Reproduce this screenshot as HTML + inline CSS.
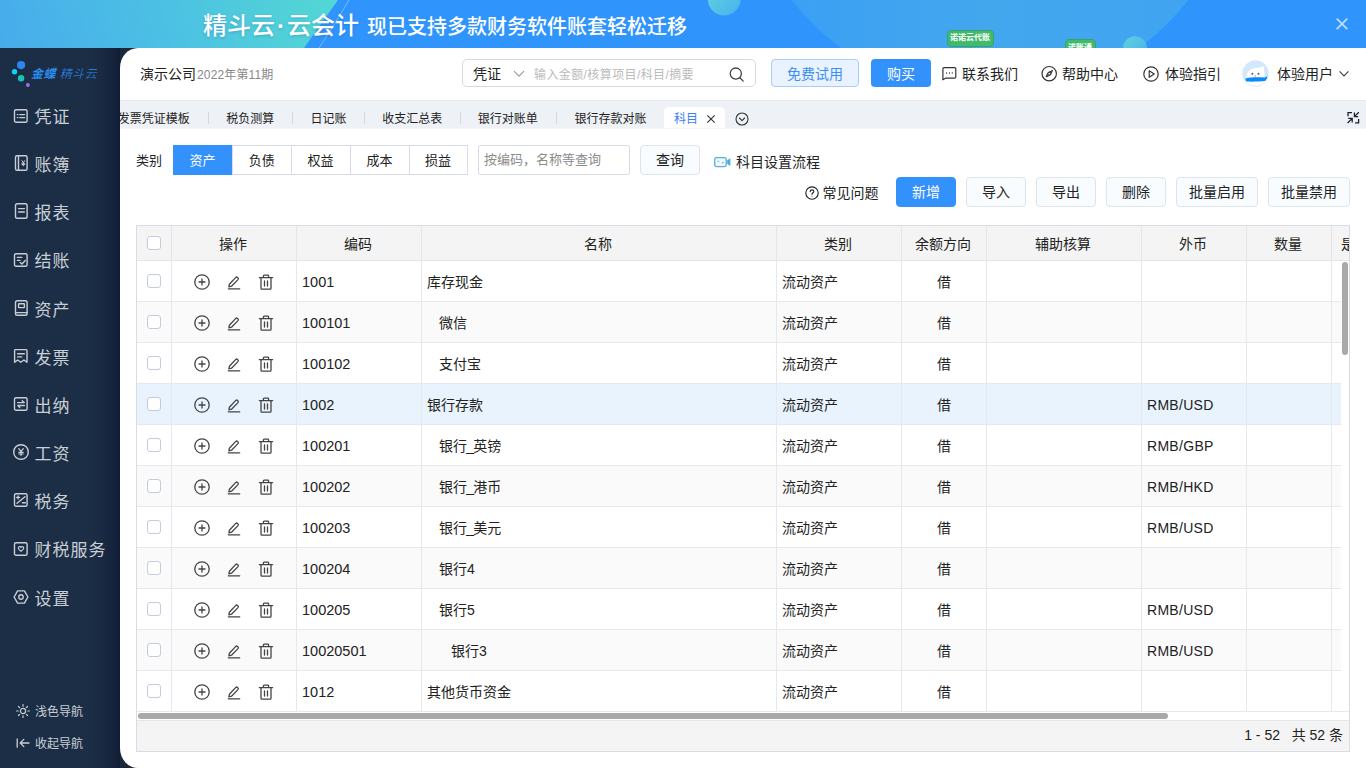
<!DOCTYPE html>
<html lang="zh-CN">
<head>
<meta charset="utf-8">
<title>精斗云·云会计 - 科目</title>
<style>
*{box-sizing:border-box;margin:0;padding:0}
html,body{width:1366px;height:768px;overflow:hidden}
body{font-family:"Liberation Sans","Noto Sans CJK SC",sans-serif;font-size:14px;color:#222;background:#1a2837;position:relative}
.abs{position:absolute}
i{font-style:normal}
#banner{position:absolute;left:0;top:0;width:1366px;height:48px;background:#2f95fd;overflow:hidden}
#banner svg{position:absolute;left:0;top:0}
#banner .t1{position:absolute;left:203px;top:9px;font-size:24px;line-height:34px;color:#fff;font-weight:500;white-space:nowrap;text-shadow:0 1px 3px rgba(0,60,120,.25)}
#banner .t1 .dot{padding:0 2px;font-weight:700}
#banner .t2{position:absolute;left:367px;top:9.500px;font-size:20px;line-height:34px;color:#fff;font-weight:500;white-space:nowrap}
#banner .tag{position:absolute;background:#41bb6b;border:1px solid #37a174;border-radius:4px;color:#fff;font-size:8px;font-weight:700;line-height:14px;text-align:center;white-space:nowrap;overflow:hidden}
#side{position:absolute;left:0;top:48px;width:120px;height:720px;background:linear-gradient(90deg,#1c2e45 0,#1c2e45 90px,#182841 106px,#111d37 120px)}
.logo{position:absolute;left:31px;top:16px;font-size:12px;line-height:20px;color:#2a8cf0;font-style:italic;white-space:nowrap;letter-spacing:.5px}
.logo b{font-weight:700}
.logo i{font-style:italic;font-weight:300}
.nav{position:absolute;left:0;width:120px;height:24px;color:#c9ced6;font-size:17px;letter-spacing:1px;line-height:24px;white-space:nowrap}
.nav svg{position:absolute;left:13px;top:2.300px}
.nav span{position:absolute;left:34.500px;top:1.500px}
.nav2{position:absolute;left:0;width:120px;height:20px;color:#c9ced6;font-size:12px;line-height:20px;white-space:nowrap}
.nav2 svg{position:absolute;left:15.800px;top:3px}
.nav2 span{position:absolute;left:35px;top:1px}
#main{position:absolute;left:120px;top:48px;width:1246px;height:720px;background:#fff;border-radius:18px 0 0 18px/20px 0 0 20px;overflow:hidden}
#hdr{position:absolute;left:0;top:0;width:1246px;height:52px}
.co{position:absolute;left:20px;top:16px;line-height:20px;white-space:nowrap}
.co .c1{font-size:14px;color:#222}
.co .c2{font-size:12px;color:#888;margin-left:1px;letter-spacing:.150px}
.search{position:absolute;left:342px;top:11px;width:294px;height:28px;border:1px solid #d9d9d9;border-radius:5px;background:#fff}
.search .s1{position:absolute;left:10px;top:4px;font-size:14px;line-height:20px;color:#222}
.search .chev{position:absolute;left:50px;top:10px}
.search .s2{position:absolute;left:71px;top:5px;font-size:12px;line-height:20px;color:#bbb;white-space:nowrap;letter-spacing:.400px}
.search .mag{position:absolute;left:265px;top:5px}
.btn-free{position:absolute;left:651px;top:11px;width:88px;height:28px;border:1px solid #a6cdfb;border-radius:4px;background:#e9f3ff;color:#3d8df5;font-size:14px;line-height:28px;text-align:center}
.btn-buy{position:absolute;left:751px;top:11px;width:60px;height:28px;border-radius:4px;background:#3391fb;color:#fff;font-size:14px;line-height:30px;text-align:center}
.hl{position:absolute;top:16px;font-size:14px;line-height:20px;color:#222;white-space:nowrap}
#tabs{position:absolute;left:0;top:52px;width:1246px;height:29px;background:#eef1f5;border-bottom:1px solid #f5f7f9;border-top:1px solid #e7eaee;font-size:12px;color:#222;overflow:hidden}
#tabs .tb{position:absolute;top:-1px;height:29px;line-height:39px;white-space:nowrap}
#tabs .sp{position:absolute;top:11px;width:1px;height:12px;background:#d3d7de}
#tabs .act{position:absolute;left:544px;top:6px;width:61px;height:22px;background:#fff;border-radius:5px 5px 0 0;color:#3b7ff5;line-height:25px}
#tabs .act span{position:absolute;left:10px;top:0}
#tabs .act svg{position:absolute;left:42px;top:7px}
.lbl{position:absolute;font-size:13px;line-height:32px;color:#222;white-space:nowrap}
.seg{position:absolute;left:53px;top:97px;width:296px;height:30px;font-size:13px}
.sg{position:absolute;top:0;width:59.750px;height:30px;border:1px solid #d9dce8;line-height:30px;text-align:center;color:#222;background:#fff}
.sg.on{background:#3391fb;border-color:#3391fb;color:#fff;z-index:1}
.q-in{position:absolute;left:358px;top:97px;width:152px;height:30px;border:1px solid #d9dce8;border-radius:2px;font-size:13px;line-height:28px;color:#8c8c8c;padding-left:5px;white-space:nowrap}
.btn{position:absolute;height:30px;border:1px solid #dfe3ea;border-radius:4px;background:#f9fcff;font-size:14px;line-height:28px;text-align:center;color:#222;white-space:nowrap}
.btn.pri{background:#3391fb;border-color:#3391fb;color:#fff}
#grid{position:absolute;left:16px;top:177px;width:1214px;height:527px;border:1px solid #d9dce6;background:#fff;overflow:hidden}
.gh{position:absolute;left:0;top:0;width:1255px;height:35px;background:#f4f4f4;border-bottom:1px solid #e4e6ea}
.hc{position:absolute;top:0;height:34px;border-right:1px solid #e4e6ea;text-align:center;line-height:37px;padding-right:2px;font-size:14px;color:#222;white-space:nowrap;overflow:hidden}
.gr{position:absolute;left:0;width:1255px;height:41px;border-bottom:1px solid #e6e8ec;background:#fff}
.gr.z{background:#fafafa}
.gr.hl{background:#e8f3fd}
.c{position:absolute;top:0;height:40px;border-right:1px solid #e6e8ee;white-space:nowrap;overflow:hidden}
.c.t{padding-left:5px;line-height:43px;font-size:14px;color:#222}
.c.ctr{text-align:center;padding-left:0}
.cb{position:absolute;left:10px;top:13px;width:14px;height:14px;border:1px solid #c3cbdd;border-radius:3px;background:#fff}
.hc .cb{top:10px}
.ic{position:absolute;top:12.300px}
.vs{position:absolute;left:1204px;top:35px;width:9px;height:450px;background:#fff}
.vsb{position:absolute;left:1204.800px;top:36px;width:6px;height:93px;border-radius:3px;background:#a9a9a9}
.hsw{position:absolute;left:0;top:486px;width:1213px;height:8px;background:#fff}
.hsb{position:absolute;left:1px;top:487px;width:1030px;height:6px;border-radius:3px;background:#a9a9a9}
.gf{position:absolute;left:0;top:494px;width:1212px;height:31px;background:#f4f4f4;border-top:1px solid #e4e6ea;text-align:right;padding-right:6px;line-height:29px;font-size:14px;color:#222}
.c.num{font-size:14.500px}
.c.cur{letter-spacing:.300px}
.u{margin:0 -.800px}

</style>
</head>
<body>
<div id="banner">
<svg width="1366" height="48" viewBox="0 0 1366 48">
<defs>
<linearGradient id="bg1" gradientUnits="userSpaceOnUse" x1="0" y1="70" x2="335" y2="-25"><stop offset="0" stop-color="#47abec"/><stop offset=".5" stop-color="#4cc1e4"/><stop offset="1" stop-color="#53d8d3"/></linearGradient>
<linearGradient id="bg2" x1="0" y1="0" x2="1" y2="0"><stop offset="0" stop-color="#3a9ef6"/><stop offset=".5" stop-color="#43a7ee"/><stop offset="1" stop-color="#3fa3f2"/></linearGradient>
<linearGradient id="bg3" x1="0" y1="0" x2="1" y2="1"><stop offset="0" stop-color="#62d6da"/><stop offset="1" stop-color="#48b0f0"/></linearGradient>
</defs>
<rect width="1366" height="48" fill="#2f95fd"/>
<path d="M0 0H338Q318 28 304 48H0Z" fill="url(#bg1)"/>
<path d="M349 0Q334 26 319 48" stroke="#6fc0f5" stroke-width="1" fill="none"/>
<circle cx="990" cy="-154" r="251" fill="url(#bg2)"/>
<circle cx="724.200" cy="-.700" r="16.300" fill="url(#bg3)"/>
<circle cx="1135" cy="48.200" r="12" fill="url(#bg3)" opacity=".9"/>
<path d="M1336.700 18.700l10.600 10.400M1347.300 18.700l-10.600 10.400" stroke="#bcdcfe" stroke-width="1.800" fill="none"/>
<path d="M966 46h8l-4 3z" fill="#3fba6c"/>
</svg>
<div class="t1">精斗云<span class="dot">·</span>云会计</div>
<div class="t2">现已支持多款财务软件账套轻松迁移</div>
<div class="tag" style="left:946.500px;top:30px;width:47px;height:16.500px">诺诺云代账</div>
<div class="tag" style="left:1064.500px;top:39px;width:31px;height:16px;line-height:16px">诺账通</div>
</div>

<div id="side">
<svg class="abs" style="left:8px;top:8px" width="26" height="40" viewBox="0 0 26 40"><circle cx="13.1" cy="9.100" r="4.100" fill="#2b86f0"/><circle cx="6.500" cy="15.700" r="2.700" fill="#0bd3f5"/><circle cx="13.100" cy="22.300" r="3.200" fill="#12c7b9"/><circle cx="19.900" cy="29" r="1.900" fill="#a66df0"/></svg>
<div class="logo"><b>金蝶</b> <i>精斗云</i></div>
<div class="nav" style="top:56.3px"><svg width="16" height="18" viewBox="0 0 16 18" fill="none" stroke="#c9ced6" stroke-width="1.4" stroke-linecap="round" stroke-linejoin="round" ><rect x="1.500" y="2.700" width="12.600" height="12.600" rx="1.600"/><path d="M4.3 7.6h.6M6.8 7.6h4.8M4.3 10.6h.6M6.8 10.6h4.8"/></svg><span>凭证</span></div>
<div class="nav" style="top:104.0px"><svg width="16" height="18" viewBox="0 0 16 18" fill="none" stroke="#c9ced6" stroke-width="1.4" stroke-linecap="round" stroke-linejoin="round" ><rect x="2.500" y="1.700" width="11.600" height="14.600" rx="1.600"/><path d="M5.500 1.900v14.200"/><path d="M8.9 6.6l1.4 2 1.4-2M10.3 8.6v3.2M8.9 9.2h2.8M8.9 10.6h2.8" stroke-width="1"/></svg><span>账簿</span></div>
<div class="nav" style="top:152.2px"><svg width="16" height="18" viewBox="0 0 16 18" fill="none" stroke="#c9ced6" stroke-width="1.4" stroke-linecap="round" stroke-linejoin="round" ><rect x="2.500" y="1.700" width="11.600" height="14.600" rx="1.800"/><path d="M5.6 6.6h5.8M5.6 10h5.8"/></svg><span>报表</span></div>
<div class="nav" style="top:200.8px"><svg width="16" height="18" viewBox="0 0 16 18" fill="none" stroke="#c9ced6" stroke-width="1.4" stroke-linecap="round" stroke-linejoin="round" ><rect x="1.500" y="2.700" width="12.600" height="12.600" rx="1.600"/><path d="M4.4 6.4h4.4M4.4 9.4h2.6M7.2 11.4l1.8 1.6 3.2-3.4"/></svg><span>结账</span></div>
<div class="nav" style="top:249.0px"><svg width="16" height="18" viewBox="0 0 16 18" fill="none" stroke="#c9ced6" stroke-width="1.4" stroke-linecap="round" stroke-linejoin="round" ><rect x="2.500" y="1.700" width="11.600" height="14.600" rx="1.800"/><rect x="5.6" y="4.8" width="5.8" height="3.8" rx=".6"/><path d="M3 13.6h11"/></svg><span>资产</span></div>
<div class="nav" style="top:297.0px"><svg width="16" height="18" viewBox="0 0 16 18" fill="none" stroke="#c9ced6" stroke-width="1.4" stroke-linecap="round" stroke-linejoin="round" ><path d="M1.600 15.300V3.600q0-1 1-1h10.400q1 0 1 1v11.700l-3.100-2.300-3.100 2.300-3.100-2.300z"/><path d="M4.600 6.800h6.800M4.600 9.900h4.200"/></svg><span>发票</span></div>
<div class="nav" style="top:345.0px"><svg width="16" height="18" viewBox="0 0 16 18" fill="none" stroke="#c9ced6" stroke-width="1.4" stroke-linecap="round" stroke-linejoin="round" ><rect x="1.500" y="2.700" width="12.600" height="12.600" rx="1.600"/><path d="M4.600 7.600h6.600l-2-1.900M11.400 10.500h-6.600l2 1.900"/></svg><span>出纳</span></div>
<div class="nav" style="top:393.0px"><svg width="16" height="18" viewBox="0 0 16 18" fill="none" stroke="#c9ced6" stroke-width="1.4" stroke-linecap="round" stroke-linejoin="round" ><circle cx="8" cy="9" r="7.300"/><path d="M5.800 5.600l2.200 3 2.200-3M8 8.600v4M5.800 9.300h4.400M5.800 11h4.400" stroke-width="1.2"/></svg><span>工资</span></div>
<div class="nav" style="top:441.2px"><svg width="16" height="18" viewBox="0 0 16 18" fill="none" stroke="#c9ced6" stroke-width="1.4" stroke-linecap="round" stroke-linejoin="round" ><rect x="1.500" y="2.700" width="12.600" height="12.600" rx="1.600"/><path d="M4 12.300l8-6.600M3.600 6.400h3M5.100 4.900v3M9.400 11.700h3"/></svg><span>税务</span></div>
<div class="nav" style="top:489.8px"><svg width="16" height="18" viewBox="0 0 16 18" fill="none" stroke="#c9ced6" stroke-width="1.4" stroke-linecap="round" stroke-linejoin="round" ><rect x="1.500" y="2.700" width="12.600" height="12.600" rx="1.600"/><path d="M8 11.300c-1.700-1.200-2.700-2.200-2.700-3.300 0-1.700 2.100-2 2.700-.6.600-1.400 2.700-1.100 2.700.6 0 1.100-1 2.100-2.700 3.300z" stroke-width="1.2"/></svg><span>财税服务</span></div>
<div class="nav" style="top:538.0px"><svg width="16" height="18" viewBox="0 0 16 18" fill="none" stroke="#c9ced6" stroke-width="1.4" stroke-linecap="round" stroke-linejoin="round" ><path d="M4.600 2.900h6.800l3.500 6.100-3.500 6.100h-6.800l-3.500-6.100z"/><circle cx="8" cy="9" r="2.200"/></svg><span>设置</span></div>
<div class="nav2" style="top:652.5px"><svg width="14" height="14" viewBox="0 0 14 14" fill="none" stroke="#c9ced6" stroke-width="1.200" stroke-linecap="round" stroke-linejoin="round"><circle cx="7" cy="7" r="2.600"/><path d="M7 .6v1.600M7 11.800v1.600M.6 7h1.600M11.800 7h1.600M2.500 2.500l1.100 1.100M10.400 10.400l1.100 1.100M2.500 11.500l1.100-1.100M10.400 3.600l1.100-1.100"/></svg><span>浅色导航</span></div>
<div class="nav2" style="top:684.5px"><svg width="14" height="14" viewBox="0 0 14 14" fill="none" stroke="#c9ced6" stroke-width="1.300" stroke-linecap="round" stroke-linejoin="round"><path d="M1.200 2.800v8.400M13 7H4.400M7.800 3.400L4.200 7l3.600 3.600"/></svg><span>收起导航</span></div>
</div>
<div id="main">
<div id="hdr">
<div class="co"><span class="c1">演示公司</span><span class="c2">2022年第11期</span></div>
<div class="search"><span class="s1">凭证</span><svg class="chev" width="12" height="8" viewBox="0 0 12 8" fill="none" stroke="#999" stroke-width="1.100"><path d="M1 1.200l5 5 5-5"/></svg><span class="s2">输入金额/核算项目/科目/摘要</span><svg class="mag" width="18" height="18" viewBox="0 0 18 18" fill="none" stroke="#444" stroke-width="1.300" stroke-linecap="round"><circle cx="7.800" cy="8.600" r="5.600"/><path d="M11.900 12.700l3.300 3.400"/></svg></div>
<div class="btn-free">免费试用</div>
<div class="btn-buy">购买</div>
<svg class="abs" style="left:821px;top:17px" width="18" height="18" viewBox="0 0 18 18" fill="none" stroke="#333" stroke-width="1.200" stroke-linejoin="round"><path d="M1.900 14.800V3.800q0-1.200 1.200-1.200h10.500q1.200 0 1.200 1.200v8.200q0 1.200-1.200 1.200H4.400z"/><path d="M5.200 8h.9M8 8h.9M10.800 8h.9" stroke-width="1.500"/></svg>
<div class="hl" style="left:842px">联系我们</div>
<svg class="abs" style="left:920px;top:17px" width="18" height="18" viewBox="0 0 18 18" fill="none" stroke="#333" stroke-width="1.200" stroke-linejoin="round"><circle cx="9.200" cy="8.700" r="7.200"/><path d="M12.500 5.500l-2 4.500-4.500 2 2-4.500z" fill="#555" stroke-width="1"/><circle cx="9.200" cy="8.700" r=".8" fill="#fff" stroke="none"/></svg>
<div class="hl" style="left:942px">帮助中心</div>
<svg class="abs" style="left:1022px;top:17px" width="18" height="18" viewBox="0 0 18 18" fill="none" stroke="#333" stroke-width="1.200" stroke-linejoin="round"><circle cx="9" cy="9" r="7.200"/><path d="M7.200 5.800v6.400l5-3.200z"/></svg>
<div class="hl" style="left:1045px">体验指引</div>
<svg class="abs" style="left:1121.500px;top:11.500px" width="27" height="27" viewBox="0 0 27 27"><defs><clipPath id="avc"><circle cx="13.500" cy="13.500" r="13"/></clipPath></defs><circle cx="13.500" cy="13.500" r="13" fill="#d3e8fd"/><g clip-path="url(#avc)"><rect x="0" y="19" width="27" height="8" fill="#fff"/><path d="M4.100 18C4.500 12.500 8 9.300 11 8.400 15 7.300 19 7.600 21.500 5.900 22 9 22.500 13 22.700 18z" fill="#fff"/><path d="M3.600 18.400C8 17.100 17 17.200 22.400 17.500 24 17.300 25 16.500 25.400 15.600 25.500 18 24.500 20.500 23 21 17 21.700 9 21.800 4.600 21.500 3.300 21 3.200 19.400 3.600 18.400z" fill="#0a8bf5"/></g><circle cx="10.400" cy="13.800" r=".95" fill="#555"/><circle cx="16.500" cy="13.800" r=".95" fill="#555"/><circle cx="13.300" cy="16" r=".75" fill="#ff7b8a"/><circle cx="8.900" cy="15.100" r=".8" fill="#ffdfe4"/><circle cx="17.700" cy="15.100" r=".8" fill="#ffdfe4"/><circle cx="13.500" cy="13.500" r="12.800" fill="none" stroke="#d3e8fd" stroke-width=".6"/></svg>
<div class="hl" style="left:1157px">体验用户</div>
<svg class="abs" style="left:1218px;top:22px" width="12" height="8" viewBox="0 0 12 8" fill="none" stroke="#444" stroke-width="1.200"><path d="M1.600 1.300l4.400 4.500 4.400-4.500"/></svg>
</div>
<div id="tabs">
<div class="tb" style="left:-2.3px">发票凭证模板</div>
<div class="tb" style="left:106.3px">税负测算</div>
<div class="tb" style="left:190.4px">日记账</div>
<div class="tb" style="left:262.2px">收支汇总表</div>
<div class="tb" style="left:357.8px">银行对账单</div>
<div class="tb" style="left:454.4px">银行存款对账</div>
<div class="sp" style="left:87.8px"></div>
<div class="sp" style="left:171.9px"></div>
<div class="sp" style="left:244.0px"></div>
<div class="sp" style="left:339.8px"></div>
<div class="sp" style="left:435.7px"></div>
<div class="act"><span>科目</span><svg width="10" height="10" viewBox="0 0 10 10" stroke="#333" stroke-width="1.100" fill="none"><path d="M1.300 1.300l7.400 7.400M8.700 1.300l-7.400 7.400"/></svg></div>
<svg class="abs" style="left:613.800px;top:9.600px" width="16" height="16" viewBox="0 0 16 16" fill="none" stroke="#333" stroke-width="1.100" stroke-linecap="round" stroke-linejoin="round"><circle cx="8" cy="8" r="6"/><path d="M5.400 7l2.600 2.600 2.600-2.600"/></svg>
<svg class="abs" style="left:1226px;top:10px" width="14" height="14" viewBox="0 0 14 14" fill="none" stroke="#1a2030" stroke-width="1.300"><path d="M2 5.200V1.600H6M9 11.800h3.600V8M12.800 1.200L8.600 5.400M8.400 1.600V5.600H12.200M1.600 12L6 7.600M2.200 7.400H6.200V11.400"/></svg>
</div>
<div class="lbl" style="left:16px;top:97px">类别</div>
<div class="seg">
<div class="sg on" style="left:0px;width:59px">资产</div>
<div class="sg" style="left:59px;width:59.5px">负债</div>
<div class="sg" style="left:117.5px;width:60px">权益</div>
<div class="sg" style="left:176.5px;width:60px">成本</div>
<div class="sg" style="left:235.5px;width:59px">损益</div>
</div>
<div class="q-in">按编码，名称等查询</div>
<div class="btn" style="left:520px;top:97px;width:60px">查询</div>
<svg class="abs" style="left:593px;top:108px" width="18" height="13" viewBox="0 0 18 13" fill="none" stroke="#56b2dc" stroke-width="1.300" stroke-linejoin="round"><rect x="1.700" y="1.600" width="11.600" height="9" rx="1.800" fill="#f0f6fa"/><path d="M14.400 4.600l2.600-1.800v6.600l-2.600-1.800z" fill="#4aa8dc" stroke-width=".8"/><path d="M4.600 5.200h1.600M9 6.600h1.400" stroke-width="1.100"/></svg>
<div class="lbl" style="left:616px;top:98px;font-size:14px;color:#222">科目设置流程</div>
<svg class="abs" style="left:685px;top:138px" width="14" height="14" viewBox="0 0 14 14" fill="none" stroke="#222" stroke-width="1.150"><circle cx="7" cy="7" r="6.200"/><path d="M5.200 5.600c0-2.400 3.600-2.300 3.600-.2 0 1.400-1.800 1.400-1.800 2.900" stroke-linecap="round"/><circle cx="7" cy="10.200" r=".5" fill="#333" stroke="none"/></svg>
<div class="lbl" style="left:702.500px;top:128.500px;font-size:14px;color:#222">常见问题</div>
<div class="btn pri" style="left:776px;top:129px;width:60px">新增</div>
<div class="btn" style="left:846px;top:129px;width:60px">导入</div>
<div class="btn" style="left:916px;top:129px;width:60px">导出</div>
<div class="btn" style="left:986px;top:129px;width:60px">删除</div>
<div class="btn" style="left:1056px;top:129px;width:82px">批量启用</div>
<div class="btn" style="left:1148px;top:129px;width:82px">批量禁用</div>
<div id="grid">
<div class="gh">
<div class="hc" style="left:0px;width:35px"><i class="cb"></i></div>
<div class="hc" style="left:35px;width:125px">操作</div>
<div class="hc" style="left:160px;width:125px">编码</div>
<div class="hc" style="left:285px;width:355px">名称</div>
<div class="hc" style="left:640px;width:125px">类别</div>
<div class="hc" style="left:765px;width:85px">余额方向</div>
<div class="hc" style="left:850px;width:155px">辅助核算</div>
<div class="hc" style="left:1005px;width:105px">外币</div>
<div class="hc" style="left:1110px;width:85px">数量</div>
<div class="hc" style="left:1195px;width:60px;text-align:left;padding-left:9px">是否现金科目</div>
</div>
<div class="gr" style="top:35px">
<div class="c" style="left:0;width:35px"><i class="cb"></i></div>
<div class="c" style="left:35px;width:125px"><svg class="ic" style="left:21px" width="18" height="18" viewBox="0 0 18 18" fill="none" stroke="#444" stroke-width="1.300" stroke-linecap="round"><circle cx="9" cy="9" r="7.200"/><path d="M9 6v6M6 9h6"/></svg><svg class="ic" style="left:54px" width="16" height="18" viewBox="0 0 16 18" fill="none" stroke="#444" stroke-width="1.300" stroke-linecap="round" stroke-linejoin="round"><path d="M3.400 11.200l6.400-6.800q.8-.7 1.600 0l.6.600q.7.800 0 1.600l-6.500 6.600-2.600.6z"/><path d="M2.300 15.800h11.400"/></svg><svg class="ic" style="left:85px" width="18" height="18" viewBox="0 0 18 18" fill="none" stroke="#444" stroke-width="1.300" stroke-linecap="round" stroke-linejoin="round"><path d="M2.400 4.600h13.200M6.400 4.400v-1.400q0-.8.800-.8h3.600q.8 0 .8.800v1.400M4 4.800v10.400q0 .9.900.9h8.200q.9 0 .9-.9v-10.400M7.500 8v5M10.500 8v5"/></svg></div>
<div class="c t num" style="left:160px;width:125px">1001</div>
<div class="c t" style="left:285px;width:355px;padding-left:5px">库存现金</div>
<div class="c t" style="left:640px;width:125px">流动资产</div>
<div class="c t ctr" style="left:765px;width:85px">借</div>
<div class="c" style="left:850px;width:155px"></div>
<div class="c t cur" style="left:1005px;width:105px"></div>
<div class="c" style="left:1110px;width:85px"></div>
<div class="c" style="left:1195px;width:60px"></div>
</div>
<div class="gr z" style="top:76px">
<div class="c" style="left:0;width:35px"><i class="cb"></i></div>
<div class="c" style="left:35px;width:125px"><svg class="ic" style="left:21px" width="18" height="18" viewBox="0 0 18 18" fill="none" stroke="#444" stroke-width="1.300" stroke-linecap="round"><circle cx="9" cy="9" r="7.200"/><path d="M9 6v6M6 9h6"/></svg><svg class="ic" style="left:54px" width="16" height="18" viewBox="0 0 16 18" fill="none" stroke="#444" stroke-width="1.300" stroke-linecap="round" stroke-linejoin="round"><path d="M3.400 11.200l6.400-6.800q.8-.7 1.600 0l.6.600q.7.800 0 1.600l-6.500 6.600-2.600.6z"/><path d="M2.300 15.800h11.400"/></svg><svg class="ic" style="left:85px" width="18" height="18" viewBox="0 0 18 18" fill="none" stroke="#444" stroke-width="1.300" stroke-linecap="round" stroke-linejoin="round"><path d="M2.400 4.600h13.200M6.400 4.400v-1.400q0-.8.800-.8h3.600q.8 0 .8.800v1.400M4 4.800v10.400q0 .9.900.9h8.200q.9 0 .9-.9v-10.400M7.500 8v5M10.500 8v5"/></svg></div>
<div class="c t num" style="left:160px;width:125px">100101</div>
<div class="c t" style="left:285px;width:355px;padding-left:17px">微信</div>
<div class="c t" style="left:640px;width:125px">流动资产</div>
<div class="c t ctr" style="left:765px;width:85px">借</div>
<div class="c" style="left:850px;width:155px"></div>
<div class="c t cur" style="left:1005px;width:105px"></div>
<div class="c" style="left:1110px;width:85px"></div>
<div class="c" style="left:1195px;width:60px"></div>
</div>
<div class="gr" style="top:117px">
<div class="c" style="left:0;width:35px"><i class="cb"></i></div>
<div class="c" style="left:35px;width:125px"><svg class="ic" style="left:21px" width="18" height="18" viewBox="0 0 18 18" fill="none" stroke="#444" stroke-width="1.300" stroke-linecap="round"><circle cx="9" cy="9" r="7.200"/><path d="M9 6v6M6 9h6"/></svg><svg class="ic" style="left:54px" width="16" height="18" viewBox="0 0 16 18" fill="none" stroke="#444" stroke-width="1.300" stroke-linecap="round" stroke-linejoin="round"><path d="M3.400 11.200l6.400-6.800q.8-.7 1.600 0l.6.600q.7.800 0 1.600l-6.500 6.600-2.600.6z"/><path d="M2.300 15.800h11.400"/></svg><svg class="ic" style="left:85px" width="18" height="18" viewBox="0 0 18 18" fill="none" stroke="#444" stroke-width="1.300" stroke-linecap="round" stroke-linejoin="round"><path d="M2.400 4.600h13.200M6.400 4.400v-1.400q0-.8.800-.8h3.600q.8 0 .8.800v1.400M4 4.800v10.400q0 .9.900.9h8.200q.9 0 .9-.9v-10.400M7.500 8v5M10.500 8v5"/></svg></div>
<div class="c t num" style="left:160px;width:125px">100102</div>
<div class="c t" style="left:285px;width:355px;padding-left:17px">支付宝</div>
<div class="c t" style="left:640px;width:125px">流动资产</div>
<div class="c t ctr" style="left:765px;width:85px">借</div>
<div class="c" style="left:850px;width:155px"></div>
<div class="c t cur" style="left:1005px;width:105px"></div>
<div class="c" style="left:1110px;width:85px"></div>
<div class="c" style="left:1195px;width:60px"></div>
</div>
<div class="gr z hl" style="top:158px">
<div class="c" style="left:0;width:35px"><i class="cb"></i></div>
<div class="c" style="left:35px;width:125px"><svg class="ic" style="left:21px" width="18" height="18" viewBox="0 0 18 18" fill="none" stroke="#444" stroke-width="1.300" stroke-linecap="round"><circle cx="9" cy="9" r="7.200"/><path d="M9 6v6M6 9h6"/></svg><svg class="ic" style="left:54px" width="16" height="18" viewBox="0 0 16 18" fill="none" stroke="#444" stroke-width="1.300" stroke-linecap="round" stroke-linejoin="round"><path d="M3.400 11.200l6.400-6.800q.8-.7 1.600 0l.6.600q.7.800 0 1.600l-6.500 6.600-2.600.6z"/><path d="M2.300 15.800h11.400"/></svg><svg class="ic" style="left:85px" width="18" height="18" viewBox="0 0 18 18" fill="none" stroke="#444" stroke-width="1.300" stroke-linecap="round" stroke-linejoin="round"><path d="M2.400 4.600h13.200M6.400 4.400v-1.400q0-.8.800-.8h3.600q.8 0 .8.800v1.400M4 4.800v10.400q0 .9.900.9h8.200q.9 0 .9-.9v-10.400M7.500 8v5M10.500 8v5"/></svg></div>
<div class="c t num" style="left:160px;width:125px">1002</div>
<div class="c t" style="left:285px;width:355px;padding-left:5px">银行存款</div>
<div class="c t" style="left:640px;width:125px">流动资产</div>
<div class="c t ctr" style="left:765px;width:85px">借</div>
<div class="c" style="left:850px;width:155px"></div>
<div class="c t cur" style="left:1005px;width:105px">RMB/USD</div>
<div class="c" style="left:1110px;width:85px"></div>
<div class="c" style="left:1195px;width:60px"></div>
</div>
<div class="gr" style="top:199px">
<div class="c" style="left:0;width:35px"><i class="cb"></i></div>
<div class="c" style="left:35px;width:125px"><svg class="ic" style="left:21px" width="18" height="18" viewBox="0 0 18 18" fill="none" stroke="#444" stroke-width="1.300" stroke-linecap="round"><circle cx="9" cy="9" r="7.200"/><path d="M9 6v6M6 9h6"/></svg><svg class="ic" style="left:54px" width="16" height="18" viewBox="0 0 16 18" fill="none" stroke="#444" stroke-width="1.300" stroke-linecap="round" stroke-linejoin="round"><path d="M3.400 11.200l6.400-6.800q.8-.7 1.600 0l.6.600q.7.800 0 1.600l-6.500 6.600-2.600.6z"/><path d="M2.300 15.800h11.400"/></svg><svg class="ic" style="left:85px" width="18" height="18" viewBox="0 0 18 18" fill="none" stroke="#444" stroke-width="1.300" stroke-linecap="round" stroke-linejoin="round"><path d="M2.400 4.600h13.200M6.400 4.400v-1.400q0-.8.800-.8h3.600q.8 0 .8.800v1.400M4 4.800v10.400q0 .9.900.9h8.200q.9 0 .9-.9v-10.400M7.500 8v5M10.500 8v5"/></svg></div>
<div class="c t num" style="left:160px;width:125px">100201</div>
<div class="c t" style="left:285px;width:355px;padding-left:17px">银行<span class=u>_</span>英镑</div>
<div class="c t" style="left:640px;width:125px">流动资产</div>
<div class="c t ctr" style="left:765px;width:85px">借</div>
<div class="c" style="left:850px;width:155px"></div>
<div class="c t cur" style="left:1005px;width:105px">RMB/GBP</div>
<div class="c" style="left:1110px;width:85px"></div>
<div class="c" style="left:1195px;width:60px"></div>
</div>
<div class="gr z" style="top:240px">
<div class="c" style="left:0;width:35px"><i class="cb"></i></div>
<div class="c" style="left:35px;width:125px"><svg class="ic" style="left:21px" width="18" height="18" viewBox="0 0 18 18" fill="none" stroke="#444" stroke-width="1.300" stroke-linecap="round"><circle cx="9" cy="9" r="7.200"/><path d="M9 6v6M6 9h6"/></svg><svg class="ic" style="left:54px" width="16" height="18" viewBox="0 0 16 18" fill="none" stroke="#444" stroke-width="1.300" stroke-linecap="round" stroke-linejoin="round"><path d="M3.400 11.200l6.400-6.800q.8-.7 1.600 0l.6.600q.7.800 0 1.600l-6.500 6.600-2.600.6z"/><path d="M2.300 15.800h11.400"/></svg><svg class="ic" style="left:85px" width="18" height="18" viewBox="0 0 18 18" fill="none" stroke="#444" stroke-width="1.300" stroke-linecap="round" stroke-linejoin="round"><path d="M2.400 4.600h13.200M6.400 4.400v-1.400q0-.8.800-.8h3.600q.8 0 .8.800v1.400M4 4.800v10.400q0 .9.900.9h8.200q.9 0 .9-.9v-10.400M7.500 8v5M10.500 8v5"/></svg></div>
<div class="c t num" style="left:160px;width:125px">100202</div>
<div class="c t" style="left:285px;width:355px;padding-left:17px">银行<span class=u>_</span>港币</div>
<div class="c t" style="left:640px;width:125px">流动资产</div>
<div class="c t ctr" style="left:765px;width:85px">借</div>
<div class="c" style="left:850px;width:155px"></div>
<div class="c t cur" style="left:1005px;width:105px">RMB/HKD</div>
<div class="c" style="left:1110px;width:85px"></div>
<div class="c" style="left:1195px;width:60px"></div>
</div>
<div class="gr" style="top:281px">
<div class="c" style="left:0;width:35px"><i class="cb"></i></div>
<div class="c" style="left:35px;width:125px"><svg class="ic" style="left:21px" width="18" height="18" viewBox="0 0 18 18" fill="none" stroke="#444" stroke-width="1.300" stroke-linecap="round"><circle cx="9" cy="9" r="7.200"/><path d="M9 6v6M6 9h6"/></svg><svg class="ic" style="left:54px" width="16" height="18" viewBox="0 0 16 18" fill="none" stroke="#444" stroke-width="1.300" stroke-linecap="round" stroke-linejoin="round"><path d="M3.400 11.200l6.400-6.800q.8-.7 1.600 0l.6.600q.7.800 0 1.600l-6.500 6.600-2.600.6z"/><path d="M2.300 15.800h11.400"/></svg><svg class="ic" style="left:85px" width="18" height="18" viewBox="0 0 18 18" fill="none" stroke="#444" stroke-width="1.300" stroke-linecap="round" stroke-linejoin="round"><path d="M2.400 4.600h13.200M6.400 4.400v-1.400q0-.8.800-.8h3.600q.8 0 .8.800v1.400M4 4.800v10.400q0 .9.900.9h8.200q.9 0 .9-.9v-10.400M7.500 8v5M10.500 8v5"/></svg></div>
<div class="c t num" style="left:160px;width:125px">100203</div>
<div class="c t" style="left:285px;width:355px;padding-left:17px">银行<span class=u>_</span>美元</div>
<div class="c t" style="left:640px;width:125px">流动资产</div>
<div class="c t ctr" style="left:765px;width:85px">借</div>
<div class="c" style="left:850px;width:155px"></div>
<div class="c t cur" style="left:1005px;width:105px">RMB/USD</div>
<div class="c" style="left:1110px;width:85px"></div>
<div class="c" style="left:1195px;width:60px"></div>
</div>
<div class="gr z" style="top:322px">
<div class="c" style="left:0;width:35px"><i class="cb"></i></div>
<div class="c" style="left:35px;width:125px"><svg class="ic" style="left:21px" width="18" height="18" viewBox="0 0 18 18" fill="none" stroke="#444" stroke-width="1.300" stroke-linecap="round"><circle cx="9" cy="9" r="7.200"/><path d="M9 6v6M6 9h6"/></svg><svg class="ic" style="left:54px" width="16" height="18" viewBox="0 0 16 18" fill="none" stroke="#444" stroke-width="1.300" stroke-linecap="round" stroke-linejoin="round"><path d="M3.400 11.200l6.400-6.800q.8-.7 1.600 0l.6.600q.7.800 0 1.600l-6.500 6.600-2.600.6z"/><path d="M2.300 15.800h11.400"/></svg><svg class="ic" style="left:85px" width="18" height="18" viewBox="0 0 18 18" fill="none" stroke="#444" stroke-width="1.300" stroke-linecap="round" stroke-linejoin="round"><path d="M2.400 4.600h13.200M6.400 4.400v-1.400q0-.8.800-.8h3.600q.8 0 .8.800v1.400M4 4.800v10.400q0 .9.900.9h8.200q.9 0 .9-.9v-10.400M7.500 8v5M10.500 8v5"/></svg></div>
<div class="c t num" style="left:160px;width:125px">100204</div>
<div class="c t" style="left:285px;width:355px;padding-left:17px">银行4</div>
<div class="c t" style="left:640px;width:125px">流动资产</div>
<div class="c t ctr" style="left:765px;width:85px">借</div>
<div class="c" style="left:850px;width:155px"></div>
<div class="c t cur" style="left:1005px;width:105px"></div>
<div class="c" style="left:1110px;width:85px"></div>
<div class="c" style="left:1195px;width:60px"></div>
</div>
<div class="gr" style="top:363px">
<div class="c" style="left:0;width:35px"><i class="cb"></i></div>
<div class="c" style="left:35px;width:125px"><svg class="ic" style="left:21px" width="18" height="18" viewBox="0 0 18 18" fill="none" stroke="#444" stroke-width="1.300" stroke-linecap="round"><circle cx="9" cy="9" r="7.200"/><path d="M9 6v6M6 9h6"/></svg><svg class="ic" style="left:54px" width="16" height="18" viewBox="0 0 16 18" fill="none" stroke="#444" stroke-width="1.300" stroke-linecap="round" stroke-linejoin="round"><path d="M3.400 11.200l6.400-6.800q.8-.7 1.600 0l.6.600q.7.800 0 1.600l-6.500 6.600-2.600.6z"/><path d="M2.300 15.800h11.400"/></svg><svg class="ic" style="left:85px" width="18" height="18" viewBox="0 0 18 18" fill="none" stroke="#444" stroke-width="1.300" stroke-linecap="round" stroke-linejoin="round"><path d="M2.400 4.600h13.200M6.400 4.400v-1.400q0-.8.800-.8h3.600q.8 0 .8.800v1.400M4 4.800v10.400q0 .9.900.9h8.200q.9 0 .9-.9v-10.400M7.500 8v5M10.500 8v5"/></svg></div>
<div class="c t num" style="left:160px;width:125px">100205</div>
<div class="c t" style="left:285px;width:355px;padding-left:17px">银行5</div>
<div class="c t" style="left:640px;width:125px">流动资产</div>
<div class="c t ctr" style="left:765px;width:85px">借</div>
<div class="c" style="left:850px;width:155px"></div>
<div class="c t cur" style="left:1005px;width:105px">RMB/USD</div>
<div class="c" style="left:1110px;width:85px"></div>
<div class="c" style="left:1195px;width:60px"></div>
</div>
<div class="gr z" style="top:404px">
<div class="c" style="left:0;width:35px"><i class="cb"></i></div>
<div class="c" style="left:35px;width:125px"><svg class="ic" style="left:21px" width="18" height="18" viewBox="0 0 18 18" fill="none" stroke="#444" stroke-width="1.300" stroke-linecap="round"><circle cx="9" cy="9" r="7.200"/><path d="M9 6v6M6 9h6"/></svg><svg class="ic" style="left:54px" width="16" height="18" viewBox="0 0 16 18" fill="none" stroke="#444" stroke-width="1.300" stroke-linecap="round" stroke-linejoin="round"><path d="M3.400 11.200l6.400-6.800q.8-.7 1.600 0l.6.600q.7.800 0 1.600l-6.500 6.600-2.600.6z"/><path d="M2.300 15.800h11.400"/></svg><svg class="ic" style="left:85px" width="18" height="18" viewBox="0 0 18 18" fill="none" stroke="#444" stroke-width="1.300" stroke-linecap="round" stroke-linejoin="round"><path d="M2.400 4.600h13.200M6.400 4.400v-1.400q0-.8.800-.8h3.600q.8 0 .8.800v1.400M4 4.800v10.400q0 .9.900.9h8.200q.9 0 .9-.9v-10.400M7.500 8v5M10.500 8v5"/></svg></div>
<div class="c t num" style="left:160px;width:125px">10020501</div>
<div class="c t" style="left:285px;width:355px;padding-left:29px">银行3</div>
<div class="c t" style="left:640px;width:125px">流动资产</div>
<div class="c t ctr" style="left:765px;width:85px">借</div>
<div class="c" style="left:850px;width:155px"></div>
<div class="c t cur" style="left:1005px;width:105px">RMB/USD</div>
<div class="c" style="left:1110px;width:85px"></div>
<div class="c" style="left:1195px;width:60px"></div>
</div>
<div class="gr" style="top:445px">
<div class="c" style="left:0;width:35px"><i class="cb"></i></div>
<div class="c" style="left:35px;width:125px"><svg class="ic" style="left:21px" width="18" height="18" viewBox="0 0 18 18" fill="none" stroke="#444" stroke-width="1.300" stroke-linecap="round"><circle cx="9" cy="9" r="7.200"/><path d="M9 6v6M6 9h6"/></svg><svg class="ic" style="left:54px" width="16" height="18" viewBox="0 0 16 18" fill="none" stroke="#444" stroke-width="1.300" stroke-linecap="round" stroke-linejoin="round"><path d="M3.400 11.200l6.400-6.800q.8-.7 1.600 0l.6.600q.7.800 0 1.600l-6.500 6.600-2.600.6z"/><path d="M2.300 15.800h11.400"/></svg><svg class="ic" style="left:85px" width="18" height="18" viewBox="0 0 18 18" fill="none" stroke="#444" stroke-width="1.300" stroke-linecap="round" stroke-linejoin="round"><path d="M2.400 4.600h13.200M6.400 4.400v-1.400q0-.8.800-.8h3.600q.8 0 .8.800v1.400M4 4.800v10.400q0 .9.900.9h8.200q.9 0 .9-.9v-10.400M7.500 8v5M10.500 8v5"/></svg></div>
<div class="c t num" style="left:160px;width:125px">1012</div>
<div class="c t" style="left:285px;width:355px;padding-left:5px">其他货币资金</div>
<div class="c t" style="left:640px;width:125px">流动资产</div>
<div class="c t ctr" style="left:765px;width:85px">借</div>
<div class="c" style="left:850px;width:155px"></div>
<div class="c t cur" style="left:1005px;width:105px"></div>
<div class="c" style="left:1110px;width:85px"></div>
<div class="c" style="left:1195px;width:60px"></div>
</div>
<div class="vs"></div><div class="vsb"></div>
<div class="hsw"></div><div class="hsb"></div>
<div class="gf">1 - 52 &nbsp; 共 52 条</div>
</div>
</div>
</body>
</html>
